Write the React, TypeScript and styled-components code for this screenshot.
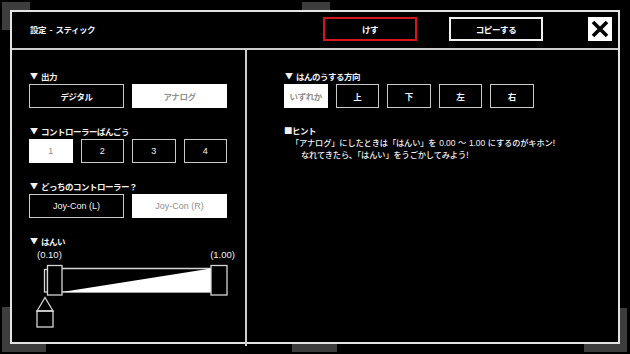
import React from "react";
import styled, { createGlobalStyle } from "styled-components";

const Global = createGlobalStyle`
  html, body { margin: 0; padding: 0; background: #000; }
  body {
    width: 630px; height: 354px; overflow: hidden;
    font-family: "Noto Sans CJK JP", "Noto Sans", sans-serif;
    color: #f2f2f2;
  }
  * { box-sizing: border-box; }
`;

const Screen = styled.div`
  position: relative;
  width: 630px;
  height: 354px;
  background: #000;
  overflow: hidden;
`;

const BgTile = styled.div<{ $x: number; $y: number; $w: number; $h: number }>`
  position: absolute;
  left: ${(p) => p.$x}px;
  top: ${(p) => p.$y}px;
  width: ${(p) => p.$w}px;
  height: ${(p) => p.$h}px;
  background: #3d3d3d;
`;

const Modal = styled.div`
  position: absolute;
  left: 10px;
  top: 10px;
  width: 610px;
  height: 334px;
  border: 2px solid #e4e4e4;
  background: #000;
  display: flex;
  flex-direction: column;
`;

const Header = styled.header`
  flex: none;
  height: 38px;
  display: flex;
  align-items: center;
  padding: 0 6px 2px 18px;
  border-bottom: 2px solid #cdcdcd;
`;

const Title = styled.h1`
  flex: 1;
  margin: 0;
  font-size: 8.5px;
  font-weight: 700;
  letter-spacing: -0.5px;
  word-spacing: 2px;
  white-space: pre;
`;

const HeaderButton = styled.button<{ $danger?: boolean; $gap: number }>`
  width: 94px;
  height: 24px;
  margin-right: ${(p) => p.$gap}px;
  background: #000;
  border: 2px solid ${(p) => (p.$danger ? "#d2161b" : "#f0f0f0")};
  color: #fff;
  font-family: inherit;
  font-size: 8.5px;
  font-weight: 700;
  letter-spacing: -0.4px;
  padding: 0;
`;

const CloseButton = styled.button`
  width: 24px;
  height: 24px;
  background: #fff;
  border: none;
  padding: 0;
  display: flex;
  align-items: center;
  justify-content: center;
`;

const Body = styled.div`
  flex: 1;
  display: flex;
`;

const LeftColumn = styled.section`
  width: 235px;
  border-right: 2px solid #cdcdcd;
  padding: 20px 0 0 17px;
`;

const RightColumn = styled.section`
  flex: 1;
  padding: 20px 0 0 37px;
`;

const Group = styled.div<{ $after?: number }>`
  margin-bottom: ${(p) => p.$after ?? 17}px;
`;

const Label = styled.div`
  height: 12px;
  line-height: 12px;
  margin: 0 0 2px 1px;
  font-size: 8.5px;
  font-weight: 700;
  letter-spacing: -0.5px;
  white-space: nowrap;
  display: flex;
  align-items: center;
`;

const Arrow = styled.span`
  font-size: 8px;
  margin-right: 3px;
  letter-spacing: 0;
`;

const ButtonGrid = styled.div<{ $cols: number; $colWidth: string }>`
  display: grid;
  grid-template-columns: repeat(${(p) => p.$cols}, ${(p) => p.$colWidth});
  column-gap: 8px;
`;

const OptionButton = styled.button<{ $selected?: boolean; $latin?: boolean }>`
  height: 24px;
  padding: 0;
  border: 1.5px solid ${(p) => (p.$selected ? "#ffffff" : "#c9c9c9")};
  background: ${(p) => (p.$selected ? "#ffffff" : "#000")};
  color: ${(p) => (p.$selected ? "#8f8f8f" : "#f4f4f4")};
  font-family: ${(p) =>
    p.$latin ? '"Liberation Sans", Arial, sans-serif' : "inherit"};
  font-size: ${(p) => (p.$latin ? "9px" : "8.5px")};
  font-weight: ${(p) => (p.$latin ? 400 : 700)};
  letter-spacing: ${(p) => (p.$latin ? "0" : "-0.4px")};
  white-space: nowrap;
`;

const RangeValues = styled.div`
  width: 206px;
  display: flex;
  justify-content: space-between;
  padding-left: 8px;
  height: 14px;
  line-height: 12px;
  font-family: "Liberation Sans", Arial, sans-serif;
  font-size: 9.5px;
`;

const RangeDrawing = styled.svg`
  display: block;
`;

const HintTitle = styled.div`
  height: 12px;
  line-height: 12px;
  font-size: 8.5px;
  font-weight: 700;
  letter-spacing: -0.5px;
`;

const HintLine = styled.p<{ $indent: number }>`
  margin: 0;
  padding-left: ${(p) => p.$indent}px;
  height: 12px;
  line-height: 12px;
  font-size: 8.2px;
  font-weight: 500;
  letter-spacing: -0.1px;
  word-spacing: 1px;
  white-space: pre;
`;

const Digits = styled.span`
  font-family: "Liberation Sans", Arial, sans-serif;
  font-size: 8.5px;
`;

const outputs = ["デジタル", "アナログ"];
const pads = ["1", "2", "3", "4"];
const controllers = ["Joy-Con (L)", "Joy-Con (R)"];
const directions = ["いずれか", "上", "下", "左", "右"];

export default function App() {
  return (
    <Screen>
      <Global />
      <BgTile $x={2} $y={2} $w={28} $h={28} />
      <BgTile $x={302} $y={2} $w={28} $h={10} />
      <BgTile $x={2} $y={307} $w={44} $h={45} />
      <BgTile $x={292} $y={336} $w={45} $h={16} />
      <BgTile $x={584} $y={308} $w={43} $h={44} />
      <Modal>
        <Header>
          <Title>設定 - スティック</Title>
          <HeaderButton $danger $gap={32}>けす</HeaderButton>
          <HeaderButton $gap={45}>コピーする</HeaderButton>
          <CloseButton aria-label="close">
            <svg width="20" height="20" viewBox="0 0 20 20">
              <path d="M3 3 L17 17 M17 3 L3 17" stroke="#000" strokeWidth="3.6" />
            </svg>
          </CloseButton>
        </Header>
        <Body>
          <LeftColumn>
            <Group>
              <Label><Arrow>▼</Arrow>出力</Label>
              <ButtonGrid $cols={2} $colWidth="95px">
                {outputs.map((o, i) => (
                  <OptionButton key={o} $selected={i === 1}>{o}</OptionButton>
                ))}
              </ButtonGrid>
            </Group>
            <Group>
              <Label><Arrow>▼</Arrow>コントローラーばんごう</Label>
              <ButtonGrid $cols={4} $colWidth="43.5px">
                {pads.map((p, i) => (
                  <OptionButton key={p} $latin $selected={i === 0}>{p}</OptionButton>
                ))}
              </ButtonGrid>
            </Group>
            <Group>
              <Label><Arrow>▼</Arrow>どっちのコントローラー？</Label>
              <ButtonGrid $cols={2} $colWidth="95px">
                {controllers.map((c, i) => (
                  <OptionButton key={c} $latin $selected={i === 1}>{c}</OptionButton>
                ))}
              </ButtonGrid>
            </Group>
            <Group>
              <Label><Arrow>▼</Arrow>はんい</Label>
              <RangeValues>
                <span>(0.10)</span>
                <span>(1.00)</span>
              </RangeValues>
              <RangeDrawing width="200" height="66" viewBox="0 0 200 66">
                <g stroke="#d6d6d6" strokeWidth="1.3" fill="#000">
                  <line x1="33" y1="5.5" x2="182" y2="5.5" />
                  <line x1="33" y1="29" x2="182" y2="29" />
                  <polygon points="33,29 182,5.5 182,29" fill="#fff" stroke="none" />
                  <rect x="15.5" y="6.5" width="3" height="22.5" />
                  <rect x="18.5" y="2.5" width="14.5" height="29.5" />
                  <rect x="182" y="2.5" width="16" height="29.5" />
                  <polygon points="16,34.5 8,48 24,48" fill="none" />
                  <rect x="8" y="48" width="16" height="16" fill="none" />
                </g>
              </RangeDrawing>
            </Group>
          </LeftColumn>
          <RightColumn>
            <Group $after={16}>
              <Label><Arrow>▼</Arrow>はんのうする方向</Label>
              <ButtonGrid $cols={5} $colWidth="43.5px">
                {directions.map((d, i) => (
                  <OptionButton key={d} $selected={i === 0}>{d}</OptionButton>
                ))}
              </ButtonGrid>
            </Group>
            <HintTitle>■ヒント</HintTitle>
            <HintLine $indent={7}>
              「アナログ」にしたときは「はんい」を <Digits>0.00</Digits> ～ <Digits>1.00</Digits> にするのがキホン!
            </HintLine>
            <HintLine $indent={17}>なれてきたら､「はんい」をうごかしてみよう!</HintLine>
          </RightColumn>
        </Body>
      </Modal>
    </Screen>
  );
}
